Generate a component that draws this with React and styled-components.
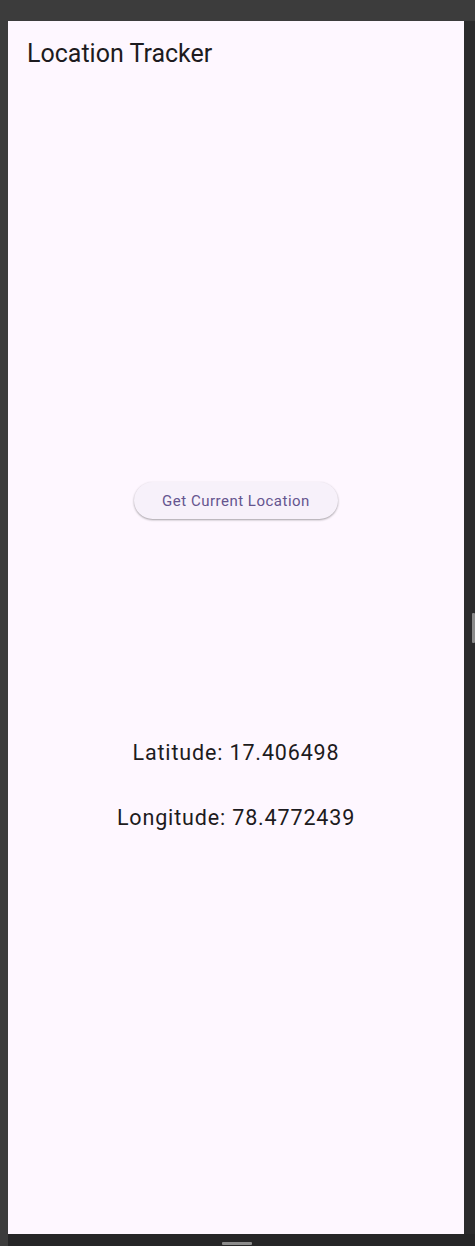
import styled, { createGlobalStyle } from 'styled-components'

const GlobalStyle = createGlobalStyle`
  html, body {
    margin: 0;
    padding: 0;
    background: #3c3c3c;
  }
  #root {
    width: 475px;
    height: 1246px;
  }
`

const Window = styled.div`
  width: 475px;
  height: 1246px;
  display: grid;
  grid-template-columns: 8px 456px 11px;
  grid-template-rows: 21px 1213px 12px;
  background: #3c3c3c;
  font-family: Roboto, "Noto Sans", sans-serif;
`

const TitleStrip = styled.div`
  grid-column: 1 / 4;
  background: #3c3c3c;
`

const SideStrip = styled.div`
  background: ${p => p.$dark ? '#2b2b2c' : '#3c3c3c'};
  display: flex;
  align-items: center;
  justify-content: flex-end;
`

const BottomStrip = styled.div`
  grid-column: 2 / 4;
  background: #262627;
  display: flex;
  padding-left: 214px;
  padding-top: 8px;
`

const Handle = styled.div`
  background: #8b8b8b;
  border-radius: 1px;
  width: ${p => p.$w}px;
  height: ${p => p.$h}px;
`

const Screen = styled.div`
  background: #fef7ff;
  display: flex;
  flex-direction: column;
`

const AppBar = styled.header`
  height: 64px;
  display: flex;
  align-items: center;
  padding-left: 19px;
`

const Title = styled.h1`
  margin: 0;
  font-size: 25px;
  font-weight: 400;
  color: #1d1b20;
`

const Body = styled.main`
  flex: 1;
  display: flex;
  flex-direction: column;
  align-items: center;
  justify-content: center;
  padding-bottom: 7px;
`

const Button = styled.button`
  width: 204px;
  height: 37px;
  border: none;
  border-radius: 19px;
  background: #f7f1fa;
  box-shadow: 0 1px 2px rgba(0, 0, 0, 0.28), 0 1px 3px rgba(0, 0, 0, 0.1);
  color: #65558f;
  font-family: Roboto, sans-serif;
  font-size: 15px;
  font-weight: 400;
  letter-spacing: 0.5px;
  margin-bottom: 221px;
`

const Coord = styled.p`
  margin: 0;
  font-size: 21.5px;
  letter-spacing: 0.85px;
  color: #1d1b20;
  margin-top: ${p => p.$mt || 0}px;
`

function App() {
  const location = { latitude: 17.406498, longitude: 78.4772439 }
  return (
    <>
      <GlobalStyle />
      <Window>
        <TitleStrip />
        <SideStrip />
        <Screen>
          <AppBar>
            <Title>Location Tracker</Title>
          </AppBar>
          <Body>
            <Button>Get Current Location</Button>
            <Coord>Latitude: {location.latitude}</Coord>
            <Coord $mt={40}>Longitude: {location.longitude}</Coord>
          </Body>
        </Screen>
        <SideStrip $dark>
          <Handle $w={3} $h={30} />
        </SideStrip>
        <SideStrip />
        <BottomStrip>
          <Handle $w={30} $h={3} />
        </BottomStrip>
      </Window>
    </>
  )
}

export default App
